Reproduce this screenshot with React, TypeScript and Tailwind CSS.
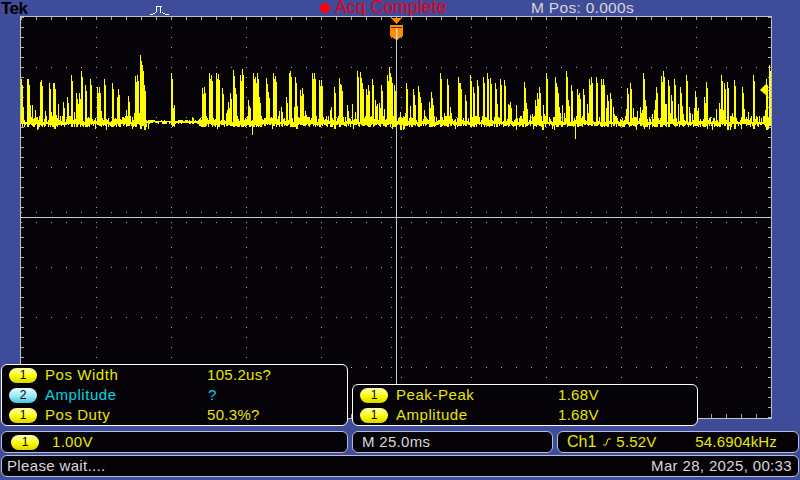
import React from "react";

const spikesRaw: [number, number][] = [
  [21.3,79],[26.7,79],[28.3,79],[40,82],[41,80],[49,83],[52.7,83],[54.3,83],[63.3,102],[67.3,97],[71.3,75],[76.3,93],[78.7,93],[81,71],[85.3,85],[90,79],[96.7,87],[98.7,87],[104,79],[111.7,83],[116.7,97],[118.3,89],[128,96],[135,76],[136.7,75],[140.3,55],[142,65],[144,85],
  [171,73],[172.7,108],[191.7,117],[201.7,88],[204,87],[209.3,73],[211,75],[216.3,73],[217.7,74],[221.7,88],[228.3,102],[230,93],[233.3,70],[235,88],[240,75],[242.3,69],[248.3,100],[253.3,73],[255,77],[256.7,73],[259.3,97],[265.7,78],
  [268,92],[273,73],[275.3,76],[286.3,97],[288.7,73],[290.3,71],[294.7,77],[296.3,100],[300.3,90],[302,88],[312,73],[313.7,73],[318.7,80],[321.3,80],[330.3,110],[334.3,87],[338.7,78],[341,85],[347,105],[357,71],[360.3,72],[362,83],[366,89],[368,85],[372.3,79],[375.3,100],[378.7,103],[381.3,85],[387,75],[389.3,67],[391,77],[393.7,85],[400.3,112],[406.3,83],[412.7,89],[414.3,99],[417.7,86],[419.7,97],[424.3,110],[428.7,102],[431,92],[439.7,73],[443.7,113],[447,79],[450.3,107],[458,77],[459.7,83],[465.3,95],[470.3,75],[472.7,87],[477,80],[483,77],[487,73],[490.3,78],[494.7,83],[500.3,79],[504.3,80],[510.3,102],[523.7,82],[526,103],
  [535,100],[537.3,93],[539,87],[545.7,73],[555,77],[557.3,87],[559,107],[564,113],[566.3,71],[568.3,100],[570.7,85],[577.3,89],[579,93],[583,89],[589,79],[590.7,97],[591.3,77],[596.3,77],[601.3,79],[603,79],[606.7,95],[610.3,93],[627.3,88],[629.7,83],[640,107],[643,73],[645,100],[654.7,100],[656.3,87],[660.7,76],[663.3,71],[668.3,80],[670.7,95],[674,79],[679.7,87],[685.7,75],[689,107],[694.7,91],[696.3,105],[704.3,97],[706.3,82],[719,103],[721.3,75],[724,83],[727.3,82],[734,80],[742.3,87],[753,75],[766.3,79],[769.3,65],
];

function rng(seed: number) {
  let s = seed;
  return () => {
    s = (s * 16807) % 2147483647;
    return s / 2147483647;
  };
}

function wavePath() {
  const r = rng(1234567);
  const spikes = new Map<number, number>();
  spikesRaw.forEach(([x, y]) => spikes.set(Math.round(x), y));
  let d = "";
  for (let x = 21; x <= 770; x++) {
    const flat = x >= 147 && x <= 170;
    const flat2 = x >= 176 && x <= 198;
    let top: number;
    let bottom: number;
    if (flat) {
      top = 120 + Math.floor(r() * 2);
      bottom = 122 + Math.floor(r() * 3);
    } else if (flat2) {
      top = 120 + Math.floor(r() * 2);
      bottom = 123 + Math.floor(r() * 2);
    } else {
      top = 116 + Math.floor(r() * 7);
      bottom = 124 + Math.floor(r() * 4);
      if (r() < 0.18) top = 104 + Math.floor(r() * 12);
      if (r() < 0.05) bottom = 129 + Math.floor(r() * 2);
    }
    const s = spikes.get(x);
    if (s !== undefined) top = s;
    if (x === 252) bottom = 135;
    if (x === 575) bottom = 139;
    if (x === 148) bottom = 129;
    d += `M${x + 0.5} ${top}V${bottom}`;
    if (s !== undefined) d += `M${x + 1.5} ${Math.min(s + 6, 118)}V${bottom}`;
  }
  return d;
}

function gridDots() {
  let major = "";
  for (let k = 0; k <= 50; k++) {
    const x = 21 + 15 * k;
    for (let row = 0; row <= 8; row++) {
      const y = 17 + 50 * row;
      major += `M${x} ${y}h1v1h-1z`;
    }
    major += `M${x} 17h1v3h-1zM${x} 414h1v3h-1z`;
    major += `M${x} 212h1v1h-1zM${x} 222h1v1h-1z`;
  }
  for (let k = 0; k <= 40; k++) {
    const y = 17 + 10 * k;
    for (let col = 0; col <= 10; col++) {
      const x = 21 + 75 * col;
      major += `M${x} ${y}h1v1h-1z`;
    }
    major += `M21 ${y}h3v1h-3zM768 ${y}h3v1h-3z`;
    major += `M391 ${y}h1v1h-1zM401 ${y}h1v1h-1z`;
  }
  return major;
}

const wave = wavePath();
const dots = gridDots();

function Badge({ n, cyan }: { n: string; cyan?: boolean }) {
  return (
    <span
      className={
        cyan
          ? "flex h-[15px] w-[28px] shrink-0 items-center justify-center rounded-full bg-gradient-to-b from-[#e8fbff] via-[#a0eaf6] to-[#3fc8e0] text-[12px] leading-none text-black"
          : "flex h-[15px] w-[28px] shrink-0 items-center justify-center rounded-full bg-gradient-to-b from-[#ffffa0] via-[#ffff00] to-[#d8d800] text-[12px] leading-none text-black"
      }
    >
      {n}
    </span>
  );
}

function Row({ n, label, value, cyan, col }: { n: string; label: string; value: string; cyan?: boolean; col: string }) {
  return (
    <div className={cyan ? "flex h-[20px] items-center text-[#00d8e0]" : "flex h-[20px] items-center text-[#e8e800]"}>
      <Badge n={n} cyan={cyan} />
      <span className={`ml-[8px] tracking-[0.55px] ${col}`}>{label}</span>
      <span className="tracking-[0.3px]">{value}</span>
    </div>
  );
}

export default function App() {
  return (
    <div className="flex h-[480px] w-[800px] flex-col overflow-hidden bg-[#3e4c99] font-['Liberation_Sans',Arial,sans-serif] text-[15px]">
      <header className="relative flex h-[16px] shrink-0 items-center overflow-hidden leading-none">
        <span className="ml-[1px] w-[149px] text-[17px] font-bold tracking-[-0.5px] text-black">Tek</span>
        <svg width="20" height="13" viewBox="0 0 20 13" className="shrink-0" shapeRendering="crispEdges">
          <path d="M0 12h3M3 11h2M5 10h1M6 4v6M6 4h6M10 4v7M12 10h1M13 11h2M15 12h4" stroke="#fff" strokeWidth="1" fill="none" strokeDasharray="none" />
        </svg>
        <span className="ml-[150px] h-[10px] w-[10px] shrink-0 rounded-full bg-[#ff0000]" />
        <span className="ml-[5px] w-[196px] text-[17.5px] tracking-[0.15px] text-[#e60012]">Acq Complete</span>
        <span className="text-[15.5px] tracking-[0.3px] text-[#d8d8d8]">M Pos: 0.000s</span>
      </header>

      <div className="flex h-[403px] shrink-0">
        <div className="w-[20px] shrink-0" />
        <div className="relative h-[403px] w-[752px] shrink-0 border border-[#c4c4c4] bg-[#050208]">
          <svg width="752" height="403" viewBox="20 16 752 403" className="absolute left-[-1px] top-[-1px]">
            <path d={dots} fill="#aaaaaa" shapeRendering="crispEdges" />
            <path d="M396.5 39V418M21 217.5H771" stroke="#c8c8c8" strokeWidth="1" shapeRendering="crispEdges" />
            <path d={wave} stroke="#ffff00" strokeWidth="1" fill="none" shapeRendering="crispEdges" />
            <path d="M391 18h11l-5.5 6z" fill="#ff8c00" />
            <path d="M390 25h13v11l-6.5 4-6.5-4z" fill="#ff8c00" />
            <path d="M391 27h11M396.5 27v13" stroke="#5a3000" strokeWidth="1" fill="none" shapeRendering="crispEdges" />
            <path d="M396 28h1.5v12H396z" fill="#d8d8d8" />
            <path d="M760 90l7-7v13z" fill="#ffff00" />
            <path d="M767 90.5h4" stroke="#d8d8a0" strokeWidth="1" shapeRendering="crispEdges" />
          </svg>
        </div>
        <div className="flex-1" />
      </div>

      <div className="relative h-0">
        <div className="absolute bottom-[-7px] left-[1px] flex h-[62px] w-[347px] flex-col justify-center rounded-[6px] border border-white bg-[#050208] pl-[7px]">
          <Row n="1" label="Pos Width" value="105.2us?" col="w-[162px]" />
          <Row n="2" cyan label="Amplitude" value="?" col="w-[163px]" />
          <Row n="1" label="Pos Duty" value="50.3%?" col="w-[162px]" />
        </div>
        <div className="absolute bottom-[-7px] left-[352px] flex h-[42px] w-[346px] flex-col justify-center rounded-[6px] border border-white bg-[#050208] pl-[7px]">
          <Row n="1" label="Peak-Peak" value="1.68V" col="w-[162px]" />
          <Row n="1" label="Amplitude" value="1.68V" col="w-[162px]" />
        </div>
      </div>

      <div className="mt-[12px] flex h-[22px] shrink-0 gap-[4px] pl-[1px] pr-[1px]">
        <div className="flex w-[347px] items-center rounded-[6px] border border-[#b8bcd8] bg-[#050208] pl-[9px] text-[#e8e800]">
          <Badge n="1" />
          <span className="ml-[13px] tracking-[0.3px]">1.00V</span>
        </div>
        <div className="flex w-[201px] items-center rounded-[6px] border border-[#b8bcd8] bg-[#050208] pl-[9px] tracking-[0.3px] text-[#d8d8d8]">
          M 25.0ms
        </div>
        <div className="flex flex-1 items-center rounded-[6px] border border-[#b8bcd8] bg-[#050208] pl-[9px] text-[#e8e800]">
          <span className="text-[16px]">Ch1</span>
          <svg width="10" height="10" viewBox="0 0 10 10" className="ml-[6px] mr-[4px] shrink-0">
            <path d="M1 8h3l2-6h3" stroke="#e8e800" strokeWidth="1" fill="none" />
          </svg>
          <span className="w-[79px] tracking-[0.2px]">5.52V</span>
          <span className="tracking-[0.15px]">54.6904kHz</span>
        </div>
      </div>

      <div className="mt-[2px] flex h-[22px] shrink-0 items-center justify-between rounded-[6px] border border-[#b8bcd8] bg-[#050208] mx-[1px] pl-[5px] pr-[6px] tracking-[0.35px] text-[#d8d8d8]">
        <span>Please wait....</span>
        <span>Mar 28, 2025, 00:33</span>
      </div>
    </div>
  );
}
